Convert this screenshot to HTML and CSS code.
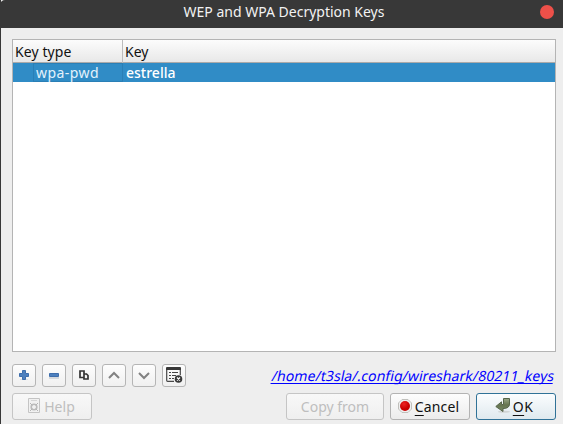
FILE: index.html
```html
<!DOCTYPE html>
<html lang="en">
<head>
<meta charset="utf-8">
<title>WEP and WPA Decryption Keys</title>
<link rel="stylesheet" href="styles.css">
</head>
<body>
<div class="dialog">
  <header class="titlebar"><h1>WEP and WPA Decryption Keys</h1><button class="close" aria-label="Close"></button></header>
  <main class="content">
    <section class="table">
      <div class="row head"><div class="type"><span class="t-type">Key type</span></div><div class="key"><span>Key</span></div></div>
      <div class="row selected"><div class="type"><span class="t-pwd">wpa-pwd</span></div><div class="key"><span class="t-val">estrella</span></div></div>
    </section>
    <div class="toolbar">
      <button class="tool" aria-label="Add"><svg width="22" height="21" viewBox="0 0 22 21"><path d="M7 14h8v1H7z" fill="#dde0e3"/><path d="M9.500 5.500h3v3h3v3h-3v3h-3v-3h-3v-3h3z" fill="#4d80be" stroke="#3e6eac"/></svg></button>
      <button class="tool" aria-label="Remove"><svg width="22" height="21" viewBox="0 0 22 21"><path d="M6 12h10v2H6z" fill="#d5d9dd"/><path d="M6.500 8.500h9v3h-9z" fill="#4d80be" stroke="#3e6eac"/></svg></button>
      <button class="tool" aria-label="Copy"><svg width="22" height="21" viewBox="0 0 22 21"><path d="M7 6h4v6.500H7zM11 9h2.500L15 10.500V14h-4z" fill="#f5f5f5" stroke="#333" stroke-width="1.700"/></svg></button>
      <button class="tool" aria-label="Move up"><svg width="22" height="21" viewBox="0 0 22 21"><path d="M6 13l5-5 5 5" fill="none" stroke="#828282" stroke-width="2"/></svg></button>
      <button class="tool" aria-label="Move down"><svg width="22" height="21" viewBox="0 0 22 21"><path d="M6 8l5 5 5-5" fill="none" stroke="#828282" stroke-width="2"/></svg></button>
      <button class="tool" aria-label="Clear all"><svg width="22" height="21" viewBox="0 0 22 21"><path d="M11 16.400H4.500q-.8 0-.8-.8V4h13.600v6" fill="none" stroke="#484848" stroke-width="1.200"/><path d="M4 2h13q1 0 1 1v2H3V3q0-1 1-1z" fill="#383838"/><path d="M6 7h2v1H6zm3 0h6v1H9zm-3 3h2v1H6zm3 0h4v1H9zm-3 3h2v1H6zm3 0h2v1H9z" fill="#444"/><circle cx="15.500" cy="14" r="3.800" fill="#383838"/><path d="M14 12.500l3 3m0-3l-3 3" stroke="#fff" stroke-width="1.200"/></svg></button>
      <a class="path">/home/t3sla/.config/wireshark/80211_keys</a>
    </div>
    <footer class="buttons">
      <button class="btn help" disabled><svg width="12" height="15" viewBox="0 0 12 15"><path d="M.5.500h11v14H.5z" fill="#f1f1f1" stroke="#c4c4c4"/><path d="M3 2.500h6" stroke="#d6d6d6"/><circle cx="6" cy="9" r="2.800" fill="none" stroke="#bbb" stroke-width="1.600"/><path d="M2 5l2.300 2.300M10 5L7.700 7.300M2 13l2.300-2.300M10 13l-2.300-2.300" stroke="#b4b4b4"/></svg><span>Help</span></button>
      <button class="btn copy" disabled><span>Copy from</span></button>
      <button class="btn cancel"><svg width="14" height="14" viewBox="0 0 14 14"><defs><radialGradient id="red" cx=".4" cy=".3"><stop stop-color="#ee2222"/><stop offset="1" stop-color="#c90000"/></radialGradient></defs><path d="M4 .5h6L13.500 4v6L10 13.500H4L.5 10V4z" fill="#eee" stroke="#c0c0bc"/><circle cx="7" cy="7" r="5" fill="url(#red)"/></svg><span><u>C</u>ancel</span></button>
      <button class="btn ok"><svg width="16" height="15" viewBox="0 0 16 15"><defs><linearGradient id="green" x2="0" y2="1"><stop stop-color="#9aa888"/><stop offset=".5" stop-color="#64744f"/><stop offset="1" stop-color="#7b8d6a"/></linearGradient></defs><ellipse cx="9" cy="13.800" rx="6" ry="1" fill="#d0d5d5"/><path d="M8.500.5h6v5.500q0 4.500-6.500 4.500v3L.8 8.500 6.500 3.800v2.700h2z" fill="url(#green)" stroke="#56654a"/></svg><span><u>O</u>K</span></button>
    </footer>
  </main>
</div>
</body>
</html>
```
FILE: styles.css
```css
* { box-sizing: border-box; }
body { margin: 0; background: #eee; color: #111; font: 14px/18px "Noto Sans", sans-serif; }
button { margin: 0; padding: 0; font: inherit; color: inherit; }
.dialog { width: 563px; height: 424px; overflow: hidden; border-left: 1px solid #383838; }
.titlebar { position: relative; height: 28px; margin-left: -1px; background: #383838; border-radius: 5px 0 0; display: flex; justify-content: center; padding: 3px 0 0 5px; }
h1 { margin: 0; color: #f2f2f2; font-weight: 400; font-size: 14px; line-height: 18px; white-space: nowrap; }
.close { position: absolute; right: 9px; top: 5px; width: 14px; height: 14px; border: 0; border-radius: 50%; background: #ed5049; }
.content { padding: 11px 7px 0 11px; }
.table { height: 313px; background: #fff; border: 1px solid #b4b4b4; }
.row { display: grid; grid-template-columns: 110px 1fr; }
.head { height: 23px; background: linear-gradient(#fcfcfc, #e8e8e8); border-bottom: 1px solid #aaa; line-height: 23px; }
.head .type { padding-left: 2px; border-right: 1px solid #bcbcbc; }
.head .key { padding-left: 2px; }
.t-type { letter-spacing: .1px; }
.selected { height: 19px; background: #308cc6; color: #fff; line-height: 19px; }
.selected .type { height: 19px; margin-left: 20px; padding-left: 2px; border: 1px solid #2a7fb6; color: #e3f2fc; line-height: 18px; }
.selected .key { padding-left: 3px; }
.t-pwd { letter-spacing: .45px; }
.t-val { font-weight: 500; }
.toolbar { display: flex; gap: 6px; margin-top: 12px; height: 23px; }
.tool { width: 24px; height: 23px; border: 1px solid #b5b5b5; border-radius: 3px; background: linear-gradient(#fdfdfd, #f0f0f0); }
.tool svg { display: block; }
.path { height: 18px; margin: 3px 3px 0 auto; color: #00f; letter-spacing: .06px; text-decoration: underline; text-decoration-skip-ink: none; text-underline-offset: 2px; white-space: nowrap; transform: skewX(-12deg); transform-origin: 50% 80%; }
.buttons { display: flex; gap: 6px; margin-top: 6px; }
.btn { height: 27px; width: 80px; display: flex; align-items: center; justify-content: center; gap: 4px; border: 1px solid #b3b3b3; border-radius: 3px; background: linear-gradient(#fdfdfd, #ececec); white-space: nowrap; }
.btn:disabled { color: #bebebe; border-color: #c5c5c5; background: linear-gradient(#f8f8f8, #efefef); }
.btn svg { flex: none; }
.btn u { text-underline-offset: 3px; }
.copy { width: 98px; margin-left: auto; }
.ok { border-color: #307297; background: linear-gradient(#fbfdfe, #dfe9ee); gap: 2px; padding-right: 4px; }
.ok span { letter-spacing: .4px; }
.help { padding-right: 1px; }
.help svg { margin-top: -3px; }
.cancel { gap: 3px; padding-right: 3px; }
.cancel span { letter-spacing: .15px; }
.cancel svg, .ok svg { margin-top: -2px; }
```
